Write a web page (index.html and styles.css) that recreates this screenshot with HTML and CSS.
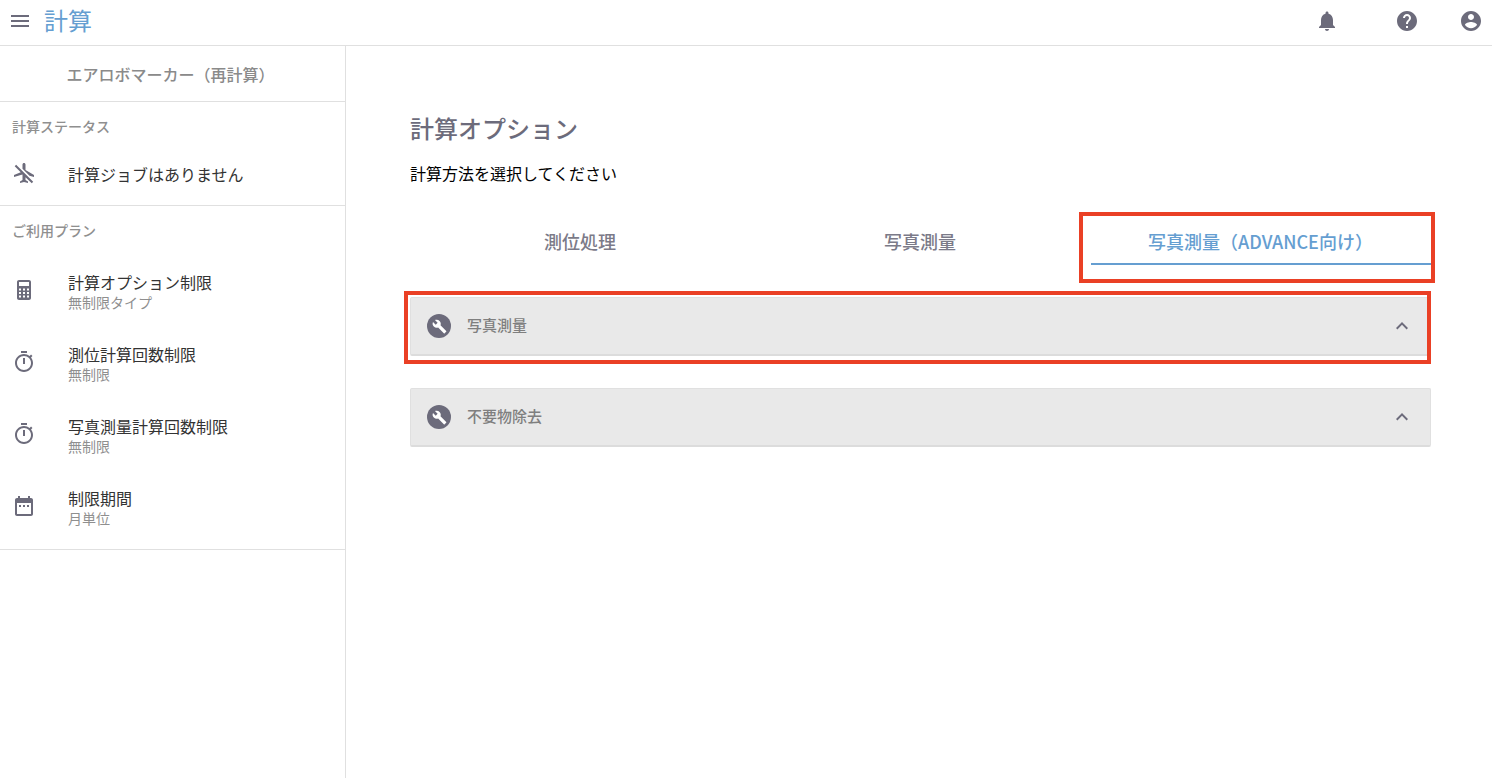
FILE: index.html
```html
<!DOCTYPE html>
<html lang="ja">
<head>
    <title>計算</title>
    <link rel="stylesheet" href="styles.css">
</head>
<body>
    <div class="header">
        <svg class="icon menu-icon" viewBox="0 0 24 24"><path d="M3 18h18v-2H3v2zm0-5h18v-2H3v2zm0-7v2h18V6H3z"/></svg>
        <span class="page-title">計算</span>
        <div class="header-actions">
            <svg class="icon bell" viewBox="0 0 24 24"><path d="M12 22c1.1 0 2-.9 2-2h-4c0 1.1.9 2 2 2zm6-6v-5c0-3.07-1.63-5.64-4.5-6.32V4c0-.83-.67-1.5-1.5-1.5s-1.5.67-1.5 1.5v.68C7.64 5.36 6 7.92 6 11v5l-2 2v1h16v-1l-2-2z"/></svg>
            <svg class="icon help" viewBox="0 0 24 24"><path d="M12 2C6.48 2 2 6.48 2 12s4.48 10 10 10 10-4.48 10-10S17.52 2 12 2zm1 17h-2v-2h2v2zm2.07-7.75l-.9.92C13.45 12.9 13 13.5 13 15h-2v-.5c0-1.1.45-2.1 1.17-2.83l1.24-1.26c.37-.36.59-.86.59-1.41 0-1.1-.9-2-2-2s-2 .9-2 2H8c0-2.21 1.79-4 4-4s4 1.79 4 4c0 .88-.36 1.68-.93 2.25z"/></svg>
            <svg class="icon account" viewBox="0 0 24 24"><path d="M12 2C6.48 2 2 6.48 2 12s4.48 10 10 10 10-4.48 10-10S17.52 2 12 2zm0 3c1.66 0 3 1.34 3 3s-1.34 3-3 3-3-1.34-3-3 1.34-3 3-3zm0 14.2c-2.5 0-4.71-1.28-6-3.22.03-1.99 4-3.08 6-3.08 1.99 0 5.97 1.09 6 3.08-1.29 1.94-3.5 3.22-6 3.22z"/></svg>
        </div>
    </div>

    <div class="layout">
        <div class="sidebar">
            <div class="job-name">エアロボマーカー（再計算）</div>

            <div class="side-section status-section">
                <div class="side-heading">計算ステータス</div>
                <div class="side-item single">
                    <svg class="icon" viewBox="0 0 24 24"><path d="M10.5 7.67V3.5c0-.83.67-1.5 1.5-1.5s1.5.67 1.5 1.5V9l8.5 5v2l-4.49-1.32-7.01-7.01zm9.28 14.61l1.41-1.41L4.13 3.8 2.72 5.22l5.99 5.99L2 14v2l8.5-2.5V19L8 20.5V22l4-1 4 1v-1.5L13.5 19v-2.67l6.28 5.95z"/></svg>
                    <div class="item-main">計算ジョブはありません</div>
                </div>
            </div>

            <div class="side-section plan-section">
                <div class="side-heading">ご利用プラン</div>
                <div class="plan-list">
                    <div class="side-item">
                        <svg class="icon" viewBox="0 0 24 24"><path d="M17 2H7c-1.1 0-2 .9-2 2v16c0 1.1.9 2 2 2h10c1.1 0 2-.9 2-2V4c0-1.1-.9-2-2-2zM7 4h10v4H7V4zm2 15.5H7v-2h2v2zm0-3.5H7v-2h2v2zm0-3.5H7v-2h2v2zm4 7h-2v-2h2v2zm0-3.5h-2v-2h2v2zm0-3.5h-2v-2h2v2zm4 7h-2v-2h2v2zm0-3.5h-2v-2h2v2zm0-3.5h-2v-2h2v2z"/></svg>
                        <div>
                            <div class="item-main">計算オプション制限</div>
                            <div class="item-sub">無制限タイプ</div>
                        </div>
                    </div>
                    <div class="side-item">
                        <svg class="icon" viewBox="0 0 24 24"><path d="M15 1H9v2h6V1zm-4 13h2V8h-2v6zm8.03-6.61l1.42-1.42c-.43-.51-.9-.99-1.41-1.41l-1.42 1.42C16.07 4.74 14.12 4 12 4c-4.97 0-9 4.03-9 9s4.02 9 9 9 9-4.03 9-9c0-2.12-.74-4.07-1.97-5.61zM12 20c-3.87 0-7-3.13-7-7s3.13-7 7-7 7 3.13 7 7-3.13 7-7 7z"/></svg>
                        <div>
                            <div class="item-main">測位計算回数制限</div>
                            <div class="item-sub">無制限</div>
                        </div>
                    </div>
                    <div class="side-item">
                        <svg class="icon" viewBox="0 0 24 24"><path d="M15 1H9v2h6V1zm-4 13h2V8h-2v6zm8.03-6.61l1.42-1.42c-.43-.51-.9-.99-1.41-1.41l-1.42 1.42C16.07 4.74 14.12 4 12 4c-4.97 0-9 4.03-9 9s4.02 9 9 9 9-4.03 9-9c0-2.12-.74-4.07-1.97-5.61zM12 20c-3.87 0-7-3.13-7-7s3.13-7 7-7 7 3.13 7 7-3.13 7-7 7z"/></svg>
                        <div>
                            <div class="item-main">写真測量計算回数制限</div>
                            <div class="item-sub">無制限</div>
                        </div>
                    </div>
                    <div class="side-item">
                        <svg class="icon" viewBox="0 0 24 24"><path d="M9 11H7v2h2v-2zm4 0h-2v2h2v-2zm4 0h-2v2h2v-2zm2-7h-1V2h-2v2H8V2H6v2H5c-1.11 0-1.99.9-1.99 2L3 20c0 1.1.89 2 2 2h14c1.1 0 2-.9 2-2V6c0-1.1-.9-2-2-2zm0 16H5V9h14v11z"/></svg>
                        <div>
                            <div class="item-main">制限期間</div>
                            <div class="item-sub">月単位</div>
                        </div>
                    </div>
                </div>
            </div>
        </div>

        <div class="content">
            <h1>計算オプション</h1>
            <p class="lead">計算方法を選択してください</p>

            <div class="tabs">
                <div class="tab">測位処理</div>
                <div class="tab">写真測量</div>
                <div class="tab selected">写真測量（ADVANCE向け）</div>
                <div class="mark mark-tab"></div>
            </div>

            <div class="panel">
                <span class="wrench">
                    <svg viewBox="0 0 24 24"><path d="M22.7 19l-9.1-9.1c.9-2.3.4-5-1.5-6.9-2-2-5-2.4-7.4-1.3L9 6 6 9 1.6 4.7C.4 7.1.9 10.1 2.9 12.1c1.9 1.9 4.6 2.4 6.9 1.5l9.1 9.1c.4.4 1 .4 1.4 0l2.3-2.3c.5-.4.5-1.1.1-1.4z"/></svg>
                </span>
                <span class="panel-title">写真測量</span>
                <svg class="icon chevron" viewBox="0 0 24 24"><path d="M12 8l-6 6 1.41 1.41L12 10.83l4.59 4.58L18 14z"/></svg>
                <div class="mark mark-panel"></div>
            </div>

            <div class="panel">
                <span class="wrench">
                    <svg viewBox="0 0 24 24"><path d="M22.7 19l-9.1-9.1c.9-2.3.4-5-1.5-6.9-2-2-5-2.4-7.4-1.3L9 6 6 9 1.6 4.7C.4 7.1.9 10.1 2.9 12.1c1.9 1.9 4.6 2.4 6.9 1.5l9.1 9.1c.4.4 1 .4 1.4 0l2.3-2.3c.5-.4.5-1.1.1-1.4z"/></svg>
                </span>
                <span class="panel-title">不要物除去</span>
                <svg class="icon chevron" viewBox="0 0 24 24"><path d="M12 8l-6 6 1.41 1.41L12 10.83l4.59 4.58L18 14z"/></svg>
            </div>
        </div>
    </div>
</body>
</html>
```

FILE: styles.css
```css
html, body {
    height: 100%;
}
body {
    margin: 0;
    background: white;
    color: #333;
    font-family: "Noto Sans CJK JP", "Noto Sans", sans-serif;
    overflow: hidden;
}
.icon {
    width: 24px;
    height: 24px;
    fill: #6c6b7b;
    flex: none;
}
.header {
    display: flex;
    align-items: center;
    box-sizing: border-box;
    height: 46px;
    border-bottom: 1px solid #e0e0e0;
    padding: 0 0 3px 8px;
}
.menu-icon { margin-right: 12px; }
.page-title {
    font-size: 24px;
    line-height: 40px;
    padding-bottom: 3px;
    color: #659ed1;
}
.header-actions {
    display: flex;
    align-items: center;
    margin-left: auto;
    padding-right: 9px;
}
.bell { margin-right: 56px; }
.help { margin-right: 40px; }

.layout {
    display: flex;
    height: 732px;
}
.sidebar {
    width: 345px;
    border-right: 1px solid #e0e0e0;
    flex: none;
}
.job-name {
    height: 55px;
    line-height: 56px;
    text-align: center;
    font-size: 16px;
    font-weight: 500;
    color: #8a8a8a;
    border-bottom: 1px solid #e0e0e0;
    padding-right: 4px;
}
.side-section {
    border-bottom: 1px solid #e0e0e0;
}
.status-section { height: 103px; }
.plan-section { height: 343px; }
.side-heading {
    padding: 14px 0 0 12px;
    font-size: 14px;
    line-height: 20px;
    font-weight: 500;
    color: #8f8f8f;
}
.side-item {
    display: flex;
    align-items: center;
    height: 72px;
    padding-left: 12px;
}
.side-item .icon { margin-right: 32px; }
.side-item.single {
    height: 56px;
    margin-top: 10px;
}
.side-item.single .icon { margin-bottom: 2px; }
.plan-list { padding-top: 15px; }
.plan-list .icon { margin-bottom: 2px; }
.item-main {
    font-size: 16px;
    line-height: 22px;
    color: #333;
}
.item-sub {
    font-size: 14px;
    line-height: 18px;
    color: #8f8f8f;
}

.content {
    flex: 1;
    padding: 63px 61px 0 64px;
}
h1 {
    margin: 0;
    font-size: 24px;
    line-height: 38px;
    font-weight: 500;
    color: #6c6b7b;
}
.lead {
    margin: 14px 0 0 0;
    font-size: 16px;
    line-height: 24px;
    color: #000;
}
.tabs {
    position: relative;
    display: flex;
    height: 56px;
    margin-top: 24px;
    margin-bottom: 32px;
}
.tab {
    flex: 0 0 340px;
    box-sizing: border-box;
    text-align: center;
    font-size: 18px;
    font-weight: 500;
    line-height: 64px;
    color: #7b7a88;
}
.tab.selected {
    margin-left: 1px;
    padding-right: 1px;
    color: #659ed1;
    border-bottom: 2px solid #659ed1;
}
.panel {
    position: relative;
    display: flex;
    align-items: center;
    box-sizing: border-box;
    height: 59px;
    margin-bottom: 32px;
    padding: 0 16px;
    background: #e9e9e9;
    border: 1px solid #e0e0e0;
    border-bottom: 2px solid #dcdcdc;
    border-radius: 2px;
}
.wrench {
    display: flex;
    align-items: center;
    justify-content: center;
    width: 24px;
    height: 24px;
    border-radius: 50%;
    background: #6c6b7b;
    margin-right: 16px;
}
.wrench svg {
    width: 15px;
    height: 15px;
    fill: white;
}
.panel-title {
    font-size: 15px;
    font-weight: 500;
    padding-bottom: 3px;
    color: #7f7f7f;
}
.chevron {
    margin-left: auto;
}
/* red annotation frames */
.mark {
    position: absolute;
    border: 4px solid #ea4025;
    box-sizing: border-box;
}
.mark-tab {
    left: 669px;
    right: -4px;
    top: 3px;
    bottom: -18px;
}
.mark-panel {
    left: -7px;
    right: -1px;
    top: -7px;
    bottom: -10px;
}
```
